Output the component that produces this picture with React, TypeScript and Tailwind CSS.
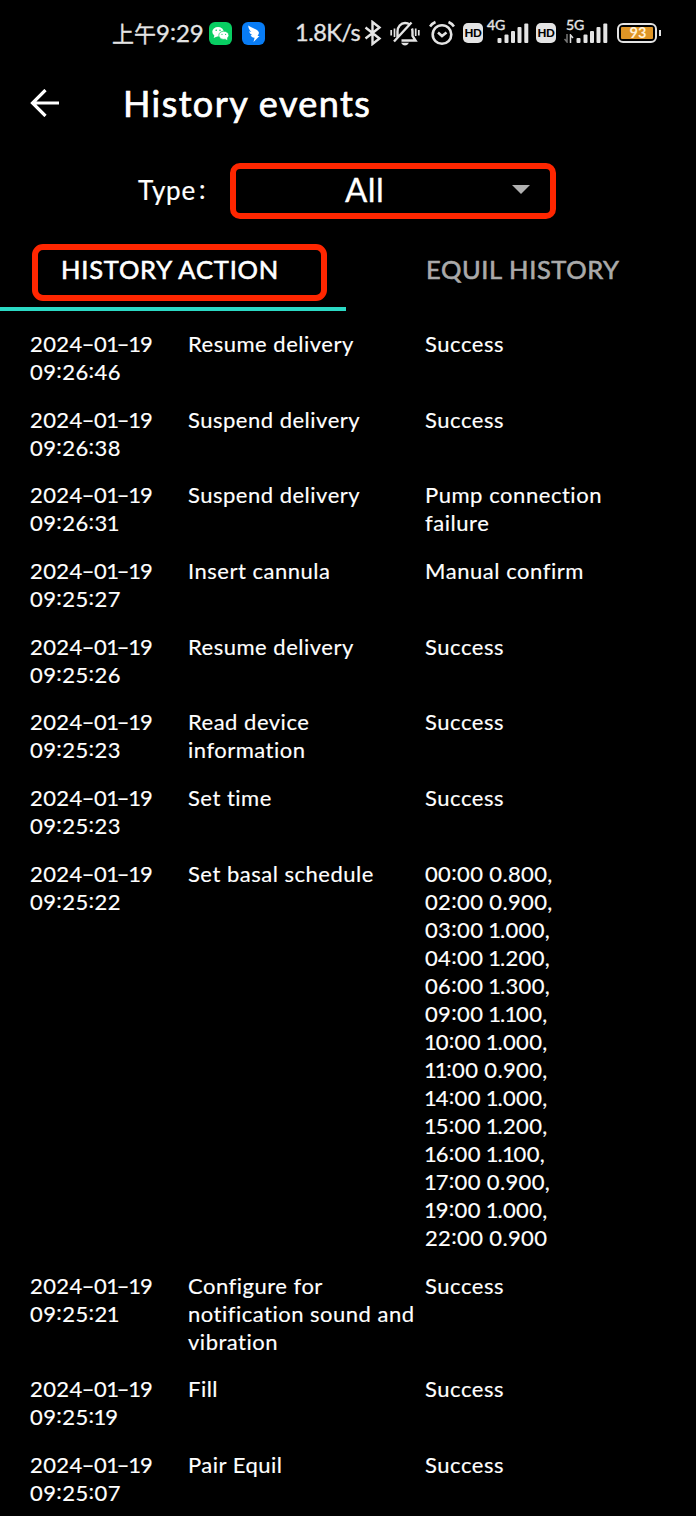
import React from "react";

type Entry = { date: string; time: string; action: string[]; result: string[] };

const ok = ["Success"];
const entries: Entry[] = [
  { date: "2024-01-19", time: "09:26:46", action: ["Resume delivery"], result: ok },
  { date: "2024-01-19", time: "09:26:38", action: ["Suspend delivery"], result: ok },
  { date: "2024-01-19", time: "09:26:31", action: ["Suspend delivery"], result: ["Pump connection", "failure"] },
  { date: "2024-01-19", time: "09:25:27", action: ["Insert cannula"], result: ["Manual confirm"] },
  { date: "2024-01-19", time: "09:25:26", action: ["Resume delivery"], result: ok },
  { date: "2024-01-19", time: "09:25:23", action: ["Read device", "information"], result: ok },
  { date: "2024-01-19", time: "09:25:23", action: ["Set time"], result: ok },
  {
    date: "2024-01-19",
    time: "09:25:22",
    action: ["Set basal schedule"],
    result: [
      "00:00 0.800,", "02:00 0.900,", "03:00 1.000,", "04:00 1.200,", "06:00 1.300,",
      "09:00 1.100,", "10:00 1.000,", "11:00 0.900,", "14:00 1.000,", "15:00 1.200,",
      "16:00 1.100,", "17:00 0.900,", "19:00 1.000,", "22:00 0.900",
    ],
  },
  { date: "2024-01-19", time: "09:25:21", action: ["Configure for", "notification sound and", "vibration"], result: ok },
  { date: "2024-01-19", time: "09:25:19", action: ["Fill"], result: ok },
  { date: "2024-01-19", time: "09:25:07", action: ["Pair Equil"], result: ok },
];

/** Numeric text with a narrow 1, raised colons and wide hyphens. */
function Figures({ text }: { text: string }) {
  return (
    <>
      {text.split(/([-:1])/).map((part, i) => {
        if (part === "1") return <span key={i} className="-mr-[1.5px] -ml-[1px]">1</span>;
        if (part === ":") return <span key={i} className="inline-block -translate-y-[2px]">:</span>;
        if (part === "-") return <span key={i} className="mx-[1.4px] inline-block scale-x-[1.6]">-</span>;
        return part;
      })}
    </>
  );
}

function Signal() {
  return (
    <svg className="h-[20px] w-[32px]" viewBox="0 0 32 20" fill="#e4e4e4">
      <rect x="0.5" y="15" width="4" height="5" rx="1" />
      <rect x="7.5" y="11.5" width="4" height="8.5" rx="1" />
      <rect x="14" y="8" width="4" height="12" rx="1" />
      <rect x="20.500" y="4" width="4" height="16" rx="1" />
      <rect x="27.300" y="0.500" width="4" height="19.500" rx="1" />
    </svg>
  );
}

function Hd() {
  return (
    <span className="flex h-[20px] w-[20px] items-center justify-center rounded-[5px] bg-[#e4e4e4] font-['Lato'] text-[11.5px] leading-none font-black tracking-[-0.2px] text-black">
      HD
    </span>
  );
}

function StatusBar() {
  return (
    <div className="flex h-[66px] items-center pl-[112px] text-[#e4e4e4]">
      <div className="w-[97px] -translate-y-px text-[24px] leading-[30px] whitespace-nowrap [-webkit-text-stroke:0.3px]">
        <span className="font-['Noto_Sans_CJK_SC'] text-[22px]">上午</span>
        <Figures text="9:29" />
      </div>
      <svg className="h-[23px] w-[23px]" viewBox="0 0 23 23">
        <rect width="23" height="23" rx="6" fill="#08ce62" />
        <ellipse cx="9" cy="9.800" rx="5.700" ry="4.800" fill="#fff" />
        <path d="M5.500 13 4.700 16 8.500 14.300z" fill="#fff" />
        <ellipse cx="14.800" cy="13.300" rx="5" ry="4.100" fill="#fff" stroke="#08ce62" strokeWidth=".7" />
        <path d="M16 16.700 18.300 18.300 18 15.500z" fill="#fff" />
        <g fill="#08ce62">
          <circle cx="7.200" cy="8.300" r=".8" />
          <circle cx="11" cy="8.300" r=".8" />
          <circle cx="13" cy="12.300" r=".6" />
          <circle cx="16.600" cy="12.300" r=".6" />
        </g>
      </svg>
      <svg className="ml-[10px] h-[23px] w-[23px]" viewBox="0 0 23 23">
        <rect width="23" height="23" rx="6" fill="#087cf5" />
        <path d="M6.300 3.500C9 6 15.500 6.800 16.800 10.200 17.300 11.500 16 13.200 15.600 14H17.500L11.500 20 12.600 15.700C10 15.500 8.900 14.300 8.700 13L10.500 13.200C8.500 12.200 7.300 10.800 7.200 9.300L9.300 9.900C7.300 8 6.200 6 6.300 3.500z" fill="#fff" />
      </svg>
      <span className="ml-[30px] w-[69px] -translate-y-px text-[23.5px] leading-[30px] tracking-[-0.5px] whitespace-nowrap [-webkit-text-stroke:0.3px]">1.8K/s</span>
      <svg className="h-[26px] w-[18px]" viewBox="0 0 18 26" fill="none" stroke="#e4e4e4" strokeWidth="2.400">
        <path d="M1.500 7.500 15.500 18.500 8.500 24V2L15.500 7.500 1.500 18.500" />
      </svg>
      <svg className="ml-[8px] h-[26px] w-[30px]" viewBox="0 0 30 26" fill="none" stroke="#e4e4e4" strokeWidth="2.400">
        <path d="M7.500 17.500V11.500C7.500 7 10.800 3 15 3 17 3 18.500 3.500 19.500 4.500M22 8.500Q22.500 10 22.500 12V16L25.500 20.500H11.500M4 21.500 21.500 2.500" />
        <path d="M11 22.800H19Q17.500 25.500 15 25.500T11 22.800z" fill="#e4e4e4" stroke="none" />
        <path d="M1.200 10V15.500M4.500 8.500V17M28.800 10V15.500M25.700 8.500V16" strokeWidth="1.700" />
      </svg>
      <svg className="ml-[9px] h-[26px] w-[26px]" viewBox="0 0 26 26" fill="none" stroke="#e4e4e4" strokeWidth="2.600">
        <circle cx="13" cy="14.500" r="9.300" />
        <path d="M9 12.500 13 16 17.500 12.500M1 6.500Q3 3.500 6.500 2M25 6.500Q23 3.500 19.500 2" />
      </svg>
      <span className="ml-[8px]"><Hd /></span>
      <div className="relative ml-[14px]">
        <Signal />
        <span className="absolute -top-[5px] -left-[10px] text-[14px] leading-[14px] [-webkit-text-stroke:0.4px]">4G</span>
      </div>
      <span className="ml-[7px]"><Hd /></span>
      <div className="relative ml-[20px]">
        <Signal />
        <span className="absolute -top-[5px] -left-[10px] text-[14px] leading-[14px] [-webkit-text-stroke:0.4px]">5G</span>
        <svg className="absolute top-[11px] -left-[12px] h-[9px] w-[10px]" viewBox="0 0 10 9" fill="none" strokeWidth="1.500">
          <path d="M3 0V8L0.500 5" stroke="#777" />
          <path d="M6.500 9V1L9 4" stroke="#ddd" />
        </svg>
      </div>
      <div className="ml-[9px] flex h-[20px] w-[40px] items-center justify-center rounded-[6px] border-2 border-[#e4e4e4] p-[2px]">
        <div className="flex h-[12px] w-full items-center justify-center rounded-[1px] bg-[#df9526] pl-[2px] text-[14.5px] leading-none font-bold text-[#fff2d8]">93</div>
      </div>
      <div className="ml-[2px] h-[6px] w-[2px] bg-[#e4e4e4]" />
    </div>
  );
}

export default function App() {
  return (
    <main className="h-[1516px] w-[696px] overflow-hidden bg-black font-['Lato','Noto_Sans_CJK_SC',sans-serif] text-white">
      <StatusBar />
      <header className="flex h-[76px] items-center pl-[30px]">
        <svg className="h-[28px] w-[30px] -translate-y-px" viewBox="0 0 30 28" fill="none" stroke="#fff" strokeWidth="3.200">
          <path d="M29 14H2M15.500 1 2.500 14 15.500 27" />
        </svg>
        <h1 className="ml-[63px] -translate-y-px text-[36px] leading-[44px] tracking-[1.4px] whitespace-nowrap [-webkit-text-stroke:0.7px]">History events</h1>
      </header>
      <div className="flex h-[102px] pt-[21px] pl-[138px]">
        <span className="w-[92px] pt-[10px] text-[26px] leading-[34px] tracking-[0.8px] [-webkit-text-stroke:0.2px]">Type<span className="ml-[3px] inline-block -translate-y-px">:</span></span>
        <div className="flex h-[56px] w-[326px] rounded-[10px] border-6 border-[#ff2600] pl-[109px]">
          <span className="w-[167px] text-[33px] leading-[40px] tracking-[0.5px] [-webkit-text-stroke:0.3px]">All</span>
          <svg className="mt-[16px] h-[9px] w-[18px]" viewBox="0 0 18 9"><path d="M0 0H18L9 9z" fill="#b0b0b0" /></svg>
        </div>
      </div>
      <nav className="flex h-[67px] items-start">
        <div className="flex h-[67px] w-[346px] flex-col justify-between border-b-4 border-[#2bd9c4] pl-[32px]">
          <div className="h-[57px] w-[295px] rounded-[11px] border-6 border-[#ff2600] pl-[23px] text-[25.5px] leading-[38px] tracking-[0.8px] whitespace-nowrap [-webkit-text-stroke:0.6px]">HISTORY ACTION</div>
        </div>
        <div className="pt-[6px] pl-[80px] text-[25.5px] leading-[38px] tracking-[0.6px] whitespace-nowrap text-[#aaa] [-webkit-text-stroke:0.6px]">EQUIL HISTORY</div>
      </nav>
      <section className="flex flex-col gap-[19.7px] pt-[19px] text-[22px] leading-[28px] whitespace-nowrap [-webkit-text-stroke:0.15px]">
        {entries.map((e, i) => (
          <div key={i} className="grid grid-cols-[158px_237px_1fr] pl-[30px]">
            <div className="tracking-[0.4px]">
              <div><Figures text={e.date} /></div>
              <div><Figures text={e.time} /></div>
            </div>
            <div className="tracking-[0.5px]">{e.action.map((line) => <div key={line}>{line}</div>)}</div>
            <div className="tracking-[0.55px]">
              {e.result.map((line) =>
                /^\d/.test(line) ? (
                  <div key={line} className="tracking-[0.35px]"><Figures text={line} /></div>
                ) : (
                  <div key={line}>{line}</div>
                ),
              )}
            </div>
          </div>
        ))}
      </section>
    </main>
  );
}
